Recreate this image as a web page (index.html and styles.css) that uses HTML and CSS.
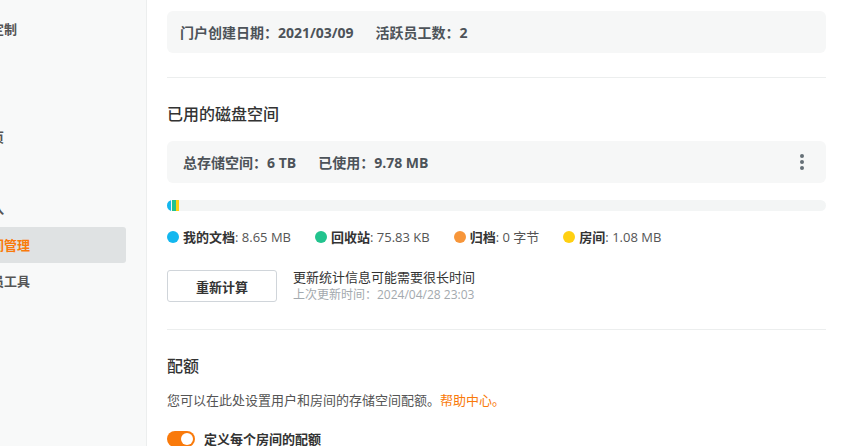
FILE: index.html
```html
<!DOCTYPE html>
<html lang="zh-CN">
<head>
    <meta charset="UTF-8">
    <meta name="viewport" content="width=device-width, initial-scale=1.0">
    <title>存储空间管理</title>
    <link rel="stylesheet" href="styles.css">
</head>
<body>
    <aside class="sidebar">
        <ul class="nav">
            <li class="nav-item">个性化定制</li>
            <li class="nav-item">安全</li>
            <li class="nav-item">备份</li>
            <li class="nav-item">门户首页</li>
            <li class="nav-item">集成</li>
            <li class="nav-item">数据导入</li>
            <li class="nav-item active">存储空间管理</li>
            <li class="nav-item">开发人员工具</li>
        </ul>
    </aside>

    <main class="main">
        <div class="info-box">
            <span>门户创建日期：2021/03/09</span>
            <span>活跃员工数：2</span>
        </div>

        <hr class="divider">

        <h2 class="section-title">已用的磁盘空间</h2>
        <div class="info-box storage">
            <span>总存储空间：6 TB</span>
            <span>已使用：9.78 MB</span>
            <span class="kebab"><i></i><i></i><i></i></span>
        </div>

        <div class="usage-bar">
            <span class="seg docs"></span>
            <span class="seg trash"></span>
            <span class="seg rooms"></span>
        </div>

        <ul class="legend">
            <li><span class="dot docs"></span><b>我的文档</b>: 8.65 MB</li>
            <li><span class="dot trash"></span><b>回收站</b>: 75.83 KB</li>
            <li><span class="dot archive"></span><b>归档</b>: 0 字节</li>
            <li><span class="dot rooms"></span><b>房间</b>: 1.08 MB</li>
        </ul>

        <div class="recalc">
            <button class="btn">重新计算</button>
            <div class="recalc-text">
                <div class="recalc-hint">更新统计信息可能需要很长时间</div>
                <div class="recalc-date">上次更新时间：2024/04/28 23:03</div>
            </div>
        </div>

        <hr class="divider">

        <h2 class="section-title">配额</h2>
        <p class="desc">您可以在此处设置用户和房间的存储空间配额。<a href="#" class="link">帮助中心。</a></p>

        <label class="toggle-row">
            <span class="toggle"><span class="knob"></span></span>
            <b>定义每个房间的配额</b>
        </label>
    </main>
</body>
</html>
```

FILE: styles.css
```css
body {
    margin: 0;
    height: 446px;
    overflow: hidden;
    display: flex;
    font-family: "Open Sans", "Noto Sans CJK SC", sans-serif;
    font-size: 13px;
    color: #333;
    background: #fff;
}
.sidebar {
    width: 146px;
    flex-shrink: 0;
    background: #f8f9f9;
    border-right: 1px solid #eceeee;
    overflow: hidden;
}
/* 菜单向左滚出了一部分 */
.nav {
    list-style: none;
    margin: 11px 0 0 -60px;
    padding: 0;
    width: 186px;
}
.nav-item {
    height: 36px;
    line-height: 36px;
    padding-left: 12px;
    white-space: nowrap;
    font-weight: 600;
    color: #555;
    border-radius: 3px;
}
.nav-item.active {
    background: #dfe2e3;
    color: #f97a0b;
}
.main {
    flex: 1;
    padding: 11px 28px 0 20px;
    min-width: 0;
}
.info-box {
    display: flex;
    align-items: center;
    gap: 22px;
    height: 42px;
    padding: 0 13px;
    background: #f6f7f7;
    border-radius: 6px;
    font-size: 14px;
    font-weight: 700;
    color: #4d5359;
}
.info-box.storage {
    padding-left: 16px;
}
.kebab {
    margin-left: auto;
    margin-right: 9px;
    display: flex;
    flex-direction: column;
    gap: 2px;
}
.kebab i {
    width: 4px;
    height: 4px;
    border-radius: 50%;
    background: #657077;
}
.divider {
    border: 0;
    border-top: 1px solid #eceeee;
    margin: 24px 0 0;
}
.section-title {
    margin: 24px 0 15px;
    font-size: 16px;
    line-height: 24px;
    font-weight: 500;
    color: #333;
}
.usage-bar {
    display: flex;
    height: 11px;
    margin-top: 17px;
    background: #f3f5f5;
    border-radius: 6px;
    overflow: hidden;
}
.seg {
    height: 100%;
}
.seg.docs { width: 4px; background: #13b7ef; }
.seg.trash { width: 4px; margin-left: 1px; background: #22c38e; }
.seg.rooms { width: 3px; background: #ffd012; }
.legend {
    list-style: none;
    margin: 16px 0 0;
    padding: 0;
    display: flex;
    gap: 24px;
    line-height: 20px;
    color: #555;
}
.legend li {
    display: flex;
    align-items: center;
}
.legend b {
    color: #333;
    font-weight: 600;
}
.dot {
    width: 12px;
    height: 12px;
    border-radius: 50%;
    margin-right: 4px;
}
.dot.docs { background: #13b7ef; }
.dot.trash { background: #22c38e; }
.dot.archive { background: #f7963a; }
.dot.rooms { background: #ffd012; }
.recalc {
    display: flex;
    align-items: center;
    gap: 16px;
    margin-top: 21px;
}
.btn {
    width: 110px;
    height: 32px;
    background: #fff;
    border: 1px solid #d0d5da;
    border-radius: 3px;
    font-family: inherit;
    font-size: 13px;
    font-weight: 600;
    color: #333;
}
.recalc-hint {
    line-height: 18px;
}
.recalc-date {
    font-size: 12px;
    line-height: 18px;
    color: #a3a9ae;
}
.recalc + .divider {
    margin-top: 25px;
}
.desc {
    margin: -3px 0 0;
    line-height: 20px;
    color: #555;
}
.link {
    color: #f97a0b;
    text-decoration: none;
}
.toggle-row {
    display: flex;
    align-items: center;
    gap: 9px;
    margin-top: 19px;
}
.toggle {
    position: relative;
    width: 28px;
    height: 16px;
    border-radius: 8px;
    background: #f97a0b;
}
.knob {
    position: absolute;
    top: 2px;
    right: 2px;
    width: 12px;
    height: 12px;
    border-radius: 50%;
    background: #fff;
}
.toggle-row b {
    font-weight: 700;
    color: #333;
}
```
